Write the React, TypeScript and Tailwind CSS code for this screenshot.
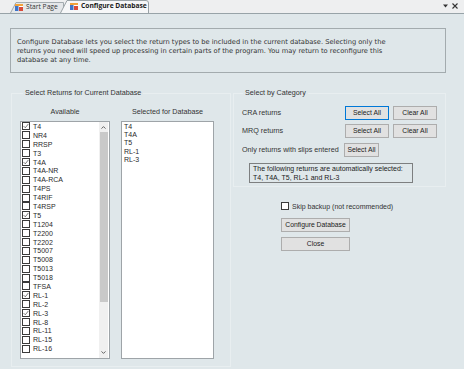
import React from "react";

const available: [string, boolean][] = [
  ["T4", true], ["NR4", false], ["RRSP", false], ["T3", false], ["T4A", true],
  ["T4A-NR", false], ["T4A-RCA", false], ["T4PS", false], ["T4RIF", false], ["T4RSP", false],
  ["T5", true], ["T1204", false], ["T2200", false], ["T2202", false], ["T5007", false],
  ["T5008", false], ["T5013", false], ["T5018", false], ["TFSA", false], ["RL-1", true],
  ["RL-2", false], ["RL-3", true], ["RL-8", false], ["RL-11", false], ["RL-15", false], ["RL-16", false],
];

const selected = ["T4", "T4A", "T5", "RL-1", "RL-3"];

const Check = ({ on }: { on: boolean }) => (
  <span className="w-[8px] h-[8px] border border-[#3a3a3a] bg-white flex items-center justify-center shrink-0">
    {on && (
      <svg width="6" height="6" viewBox="0 0 6 6">
        <path d="M0.6 3.1 L2.3 4.8 L5.4 0.9" stroke="#444" strokeWidth="0.7" fill="none" />
      </svg>
    )}
  </span>
);

const Btn = ({ label, cls }: { label: string; cls: string }) => (
  <button className={`h-[14px] bg-[#e1e1e1] border text-[6.8px] leading-none text-[#222] ${cls}`}>{label}</button>
);

const TabIcon = () => (
  <svg width="8" height="7" viewBox="0 0 8 7" className="shrink-0">
    <rect x="0" y="0" width="8" height="7" fill="#fff" />
    <rect x="0" y="0" width="8" height="2" fill="#f2a23a" />
    <rect x="0" y="2" width="3.5" height="5" fill="#3f74c8" />
    <rect x="4" y="3" width="4" height="4" fill="#d94b3a" />
  </svg>
);

const App = (): JSX.Element => {
  return (
    <div className="w-[464px] h-[369px] overflow-hidden bg-[#dfe7ea] font-['Liberation_Sans',Arial,sans-serif] text-[#2a2a2a]">
      {/* tab strip */}
      <div className="h-[14px] bg-[#eeeff0] border-b border-[#98a3a8] flex items-end">
        <div className="relative w-[54px] h-[11px] ml-[10px] flex items-center pl-[5px] gap-[3px]">
          <svg className="absolute left-0 top-0" width="54" height="11" viewBox="0 0 54 11">
            <path d="M0.5 11 L6 0.5 H53.5 V11" fill="#e4e7e9" stroke="#a3abaf" strokeWidth="1" />
          </svg>
          <span className="relative"><TabIcon /></span>
          <span className="relative font-['Open_Sans',sans-serif] text-[6.7px] leading-none text-[#333]">Start Page</span>
        </div>
        <div className="relative w-[89px] h-[13px] -ml-[4px] flex items-center pl-[10px] gap-[3px]">
          <svg className="absolute left-0 top-0" width="89" height="13" viewBox="0 0 89 13">
            <path d="M0.5 13 L7 0.5 H86 Q88.5 0.5 88.5 3 V13" fill="#f6f7f8" stroke="#99a2a6" strokeWidth="1" />
          </svg>
          <span className="relative"><TabIcon /></span>
          <span className="relative font-['Open_Sans',sans-serif] font-bold text-[6.7px] leading-none text-[#1a1a1a]">Configure Database</span>
        </div>
        <div className="ml-auto mr-[6px] mb-[4px] flex items-center gap-[4px]">
          <svg width="5" height="4" viewBox="0 0 5 4"><path d="M0 0.5 H5 L2.5 3.5 Z" fill="#333" /></svg>
          <svg width="6" height="6" viewBox="0 0 6 6"><path d="M0.5 0.5 L5.5 5.5 M5.5 0.5 L0.5 5.5" stroke="#333" strokeWidth="1.1" /></svg>
        </div>
      </div>

      <div className="px-[10px]">
        {/* description */}
        <div className="mt-[14px] w-[436px] h-[45px] border border-[#a3abae] pl-[6px] pt-[9px] font-['DejaVu_Sans',Verdana,sans-serif] text-[6.7px] leading-[9px] text-[#333] whitespace-nowrap">
          Configure Database lets you select the return types to be included in the current database. Selecting only the<br />
          returns you need will speed up processing in certain parts of the program. You may return to reconfigure this<br />
          database at any time.
        </div>

        <div className="flex items-start">
          {/* left group */}
          <fieldset className="ml-[1px] mt-[15px] w-[220px] h-[279px] border border-[#e8eef0] pl-[8px] pt-[10px]">
            <legend className="ml-[3px] px-[2px] text-[7.2px] leading-[10px] text-[#333]">Select Returns for Current Database</legend>
            <div className="flex gap-[11px]">
              <div className="flex flex-col items-center">
                <div className="text-[7.2px] leading-[8px] text-[#333]">Available</div>
                <div className="mt-[5px] w-[90px] h-[238px] border border-[#9ea4a8] bg-white flex overflow-hidden">
                  <div className="flex-1 flex flex-col pl-[1px]">
                    {available.map(([name, on]) => (
                      <div key={name} className="h-[8.9px] shrink-0 flex items-center gap-[3px]">
                        <Check on={on} />
                        <span className="text-[7px] leading-none">{name}</span>
                      </div>
                    ))}
                  </div>
                  <div className="w-[9px] bg-[#f0f0f0] flex flex-col items-center mr-[1px]">
                    <div className="h-[10px] flex items-center justify-center">
                      <svg width="5" height="3" viewBox="0 0 5 3"><path d="M0.5 2.6 L2.5 0.6 L4.5 2.6" stroke="#555" strokeWidth="0.9" fill="none" /></svg>
                    </div>
                    <div className="w-[8px] h-[170px] bg-[#c9c9c9]" />
                    <div className="flex-1" />
                    <div className="h-[11px] flex items-center justify-center">
                      <svg width="5" height="3" viewBox="0 0 5 3"><path d="M0.5 0.4 L2.5 2.4 L4.5 0.4" stroke="#555" strokeWidth="0.9" fill="none" /></svg>
                    </div>
                  </div>
                </div>
              </div>
              <div className="flex flex-col items-center">
                <div className="text-[7.2px] leading-[8px] text-[#333]">Selected for Database</div>
                <div className="mt-[5px] w-[93px] h-[238px] border border-[#9ea4a8] bg-white pl-[2px]">
                  {selected.map((s) => (
                    <div key={s} className="h-[8.4px] flex items-center text-[7px] leading-none">{s}</div>
                  ))}
                </div>
              </div>
            </div>
          </fieldset>

          {/* right column */}
          <div className="ml-[2px] w-[213px] flex flex-col">
            <fieldset className="mt-[15px] w-[213px] h-[99px] border border-[#e8eef0] pl-[8px] pt-[8px]">
              <legend className="ml-[1px] px-[2px] text-[7.2px] leading-[10px] text-[#333]">Select by Category</legend>
              <div className="flex items-center h-[14px]">
                <span className="w-[103px] text-[7.2px] leading-none text-[#333]">CRA returns</span>
                <Btn label="Select All" cls="w-[44px] border-[#0078d7]" />
                <Btn label="Clear All" cls="w-[44px] ml-[4px] border-[#adadad]" />
              </div>
              <div className="flex items-center h-[14px] mt-[4px]">
                <span className="w-[103px] text-[7.2px] leading-none text-[#333]">MRQ returns</span>
                <Btn label="Select All" cls="w-[44px] border-[#adadad]" />
                <Btn label="Clear All" cls="w-[44px] ml-[4px] border-[#adadad]" />
              </div>
              <div className="flex items-center h-[14px] mt-[5px]">
                <span className="w-[102px] text-[7.2px] leading-none text-[#333] whitespace-nowrap">Only returns with slips entered</span>
                <Btn label="Select All" cls="w-[35px] border-[#adadad]" />
              </div>
              <div className="mt-[6px] ml-[7px] w-[164px] h-[20px] border border-[#7d7f80] pl-[3px] pt-[1px] text-[7px] leading-[8.5px] text-[#222] whitespace-nowrap">
                The following returns are automatically selected:<br />
                T4, T4A, T5, RL-1 and RL-3
              </div>
            </fieldset>

            <div className="ml-[48px] mt-[15px] flex items-center gap-[3px] h-[8px]">
              <Check on={false} />
              <span className="text-[7px] leading-none text-[#333]">Skip backup (not recommended)</span>
            </div>
            <Btn label="Configure Database" cls="ml-[48px] mt-[8px] w-[69px] border-[#adadad]" />
            <Btn label="Close" cls="ml-[48px] mt-[5px] w-[69px] border-[#adadad]" />
          </div>
        </div>
      </div>
    </div>
  );
};

export default App;
